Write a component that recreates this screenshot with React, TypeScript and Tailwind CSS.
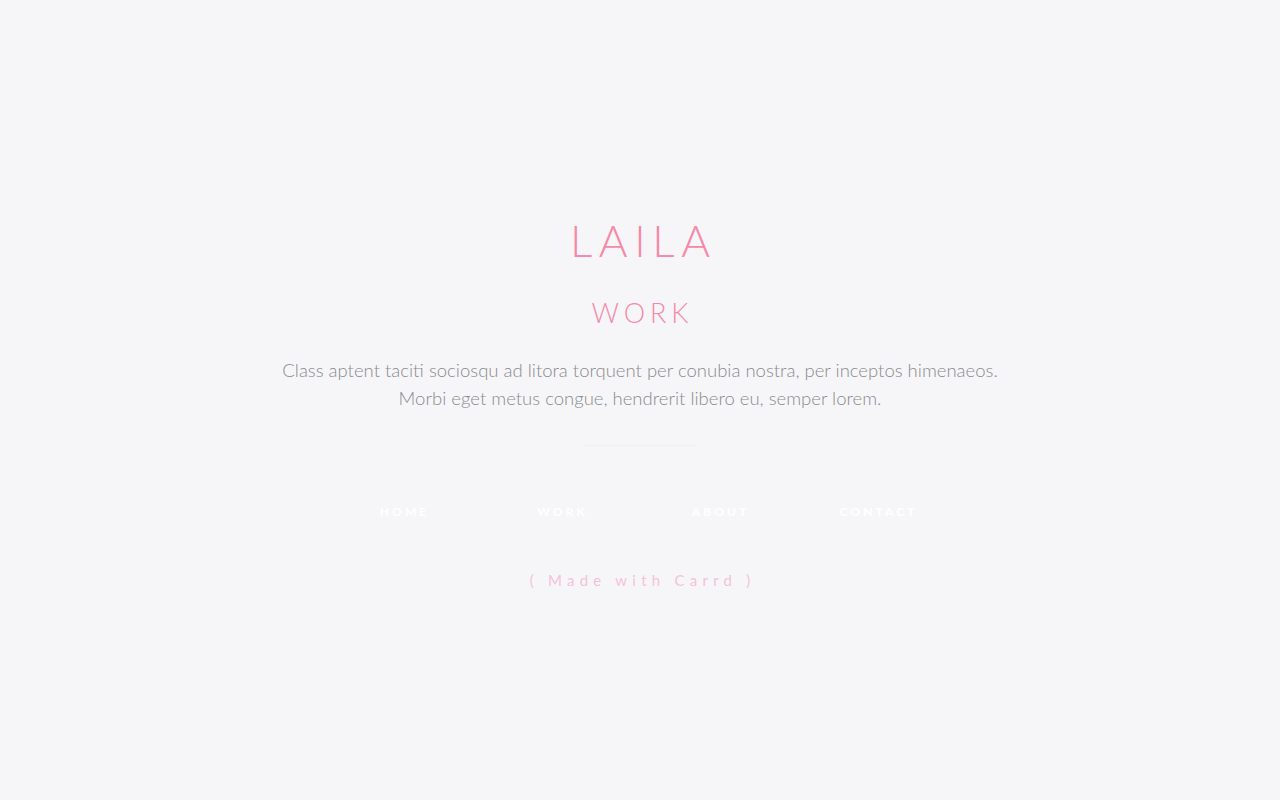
import React from 'react';

const font = { fontFamily: 'Lato, "Noto Sans", sans-serif' };

export default function App() {
  const nav = ['HOME', 'WORK', 'ABOUT', 'CONTACT'];
  return (
    <div className="min-h-screen w-full bg-[#f6f6f8] flex flex-col items-center pt-[212px]" style={font}>
      <h1 className="text-[44px] leading-[56px] font-light tracking-[0.15em] pl-[0.15em] text-[#f48aa8]">LAILA</h1>
      <h2 className="mt-[27px] text-[27px] leading-[36px] font-light tracking-[0.18em] pl-[0.18em] text-[#f48aa8]">WORK</h2>
      <p className="mt-[25px] text-[18.5px] leading-[28px] font-light text-[#8a8a8e] text-center">
        Class aptent taciti sociosqu ad litora torquent per conubia nostra, per inceptos himenaeos.
        <br />
        Morbi eget metus congue, hendrerit libero eu, semper lorem.
      </p>
      <div className="mt-[33px] h-px w-[112px] bg-[#efeff2]" />
      <nav className="mt-[46px] flex gap-[8px]">
        {nav.map((n) => (
          <a key={n} className="w-[150px] h-[40px] flex items-center justify-center text-[12px] font-bold tracking-[0.26em] pl-[0.26em] text-white">
            {n}
          </a>
        ))}
      </nav>
      <div className="mt-[37px] text-[15px] tracking-[0.35em] pl-[0.35em] text-[#f5c3d5]">( Made with Carrd )</div>
    </div>
  );
}
